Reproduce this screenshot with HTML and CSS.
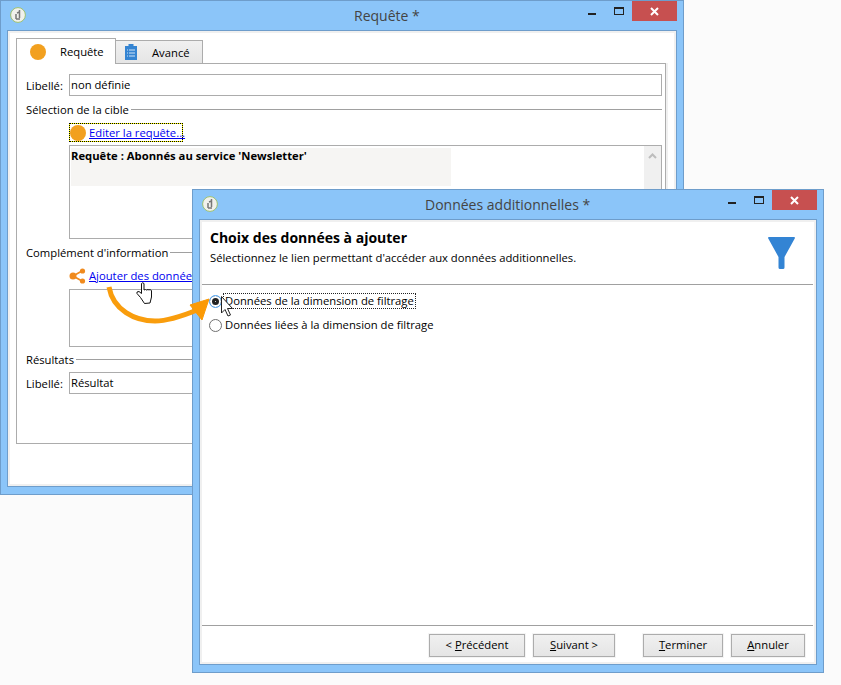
FILE: index.html
```html
<!DOCTYPE html>
<html lang="fr">
<head>
<meta charset="utf-8">
<title>Requête</title>
<link rel="stylesheet" href="styles.css">
</head>
<body>
<div class="desk">
  <section class="win win-main">
    <header class="titlebar">
      <svg class="appicon" viewBox="0 0 16 16"><circle cx="8" cy="8" r="7.400" fill="#f1f1ec" stroke="#9cc070"/><path d="M9.500 3v8M6 7v5M7 6l2.500-1M6 12h4" stroke="#777" stroke-width="1.500" fill="none"/></svg>
      <h1 class="title title-main">Requête *</h1>
      <span class="ctl-min"></span><span class="ctl-max"></span>
      <span class="ctl-close"><svg viewBox="0 0 9 9" width="9" height="9"><path d="M1 1l7 7M8 1L1 8" stroke="#fff" stroke-width="2"/></svg></span>
    </header>
    <div class="client">
      <div class="tabs">
        <div class="tab tab-on"><span class="dot"></span><span>Requête</span></div>
        <div class="tab tab-off">
          <svg class="clip" viewBox="0 0 12 16"><path d="M0 2h3.500V0h5v2H12v14H0z" fill="#3484d2"/><path d="M4 6h6M4 9h6M4 12h6M2 6h1M2 9h1M2 12h1" stroke="#cfe3f6"/></svg>
          <span>Avancé</span>
        </div>
      </div>
      <div class="pane">
        <div class="row"><label class="lbl">Libellé:</label><div class="input">non définie</div></div>
        <div class="legend legend-a"><span>Sélection de la cible</span><i></i></div>
        <div class="linkrow linkrow-a"><a class="focus"><span class="dot"></span><span class="lnk">Editer la requête...</span></a></div>
        <div class="memo memo-a">
          <div class="query">Requête : Abonnés au service 'Newsletter'</div>
          <div class="sbar"><svg viewBox="0 0 9 6" width="9" height="6"><path d="M1 5l3.500-3.500L8 5" fill="none" stroke="#bdbdbd" stroke-width="2"/></svg></div>
        </div>
        <div class="legend legend-b"><span>Complément d'information</span><i></i></div>
        <div class="linkrow linkrow-b">
          <svg class="share" viewBox="0 0 17 16"><path d="M4 8l9-5M4 8l9 5" stroke="#f08a1d" stroke-width="1.700"/><circle cx="4" cy="8" r="3.500" fill="#f08a1d"/><circle cx="13.500" cy="3" r="2.600" fill="#f08a1d"/><circle cx="13.500" cy="13" r="2.600" fill="#f08a1d"/></svg>
          <span class="lnk">Ajouter des données...</span>
        </div>
        <div class="memo memo-b"></div>
        <div class="legend legend-c"><span>Résultats</span><i></i></div>
        <div class="row row-c"><label class="lbl">Libellé:</label><div class="input">Résultat</div></div>
      </div>
    </div>
  </section>

  <section class="win win-sub">
    <header class="titlebar">
      <svg class="appicon" viewBox="0 0 16 16"><circle cx="8" cy="8" r="7.400" fill="#f1f1ec" stroke="#9cc070"/><path d="M9.500 3v8M6 7v5M7 6l2.500-1M6 12h4" stroke="#777" stroke-width="1.500" fill="none"/></svg>
      <h1 class="title title-sub">Données additionnelles *</h1>
      <span class="ctl-min"></span><span class="ctl-max"></span>
      <span class="ctl-close"><svg viewBox="0 0 9 9" width="9" height="9"><path d="M1 1l7 7M8 1L1 8" stroke="#fff" stroke-width="2"/></svg></span>
    </header>
    <div class="client client-sub">
      <div class="head">
        <div class="head-text">
          <h2 class="h2">Choix des données à ajouter</h2>
          <p class="sub">Sélectionnez le lien permettant d'accéder aux données additionnelles.</p>
        </div>
        <svg class="funnel" viewBox="0 0 27 32"><path d="M1 0h25q1 0 1 1L16.500 20v10.500q0 1.500-1.500 1.500h-3q-1.500 0-1.500-1.500V20L0 1q0-1 1-1z" fill="#3384d4"/></svg>
      </div>
      <div class="options">
        <div class="opt"><span class="radio radio-on"></span><span class="opt-label opt-focus">Données de la dimension de filtrage</span></div>
        <div class="opt"><span class="radio"></span><span class="opt-label">Données liées à la dimension de filtrage</span></div>
      </div>
      <footer class="foot">
        <button class="btn btn-prev">&lt; <u>P</u>récédent</button>
        <button class="btn btn-next"><u>S</u>uivant &gt;</button>
        <button class="btn btn-end"><u>T</u>erminer</button>
        <button class="btn btn-cancel"><u>A</u>nnuler</button>
      </footer>
    </div>
  </section>

  <svg class="overlay" viewBox="0 0 841 685" width="841" height="685">
    <path d="M109 287C113 310 135 321 155 321C170 321 185 315 197 310" fill="none" stroke="#f99d0d" stroke-width="5"/>
    <path d="M190 305L209 299L202 320z" fill="#fb9a06" stroke="#fb9a06" stroke-width="1"/>
    <path d="M144.500 303.500l-4-6-3.500-4v-1.500l2-.5 2.500 2v-10q1-1.500 2.500 0v6.500l1.500-.5 1 .5 1.500-.5 1 .5 1-.5 1.500 1v6.500l-1.500 6z" fill="#fff" stroke="#111" stroke-width="1"/>
    <path d="M221.500 296.500v16.500l3.500-3.500 3 6.500 2.500-1-3-6.500h5z" fill="#fff" stroke="#222" stroke-width="1"/>
  </svg>
</div>
</body>
</html>
```
FILE: styles.css
```css
* { box-sizing: border-box; }
html, body { margin: 0; padding: 0; }
body { width: 841px; height: 685px; overflow: hidden; background: #fbfbfb; font-family: "Open Sans", "Noto Sans", sans-serif; font-size: 11.25px; color: #000; }
.desk { position: relative; width: 841px; height: 685px; background: #fbfbfb; }

.win { position: absolute; display: flex; flex-direction: column; background: #8bc5f9; border: 1px solid #6e9dcb; }
.win-main { left: 0; top: 0; width: 684px; height: 495px; }
.win-sub { left: 192px; top: 189px; width: 632px; height: 484px; }

.titlebar { display: flex; align-items: flex-start; height: 29px; flex: none; position: relative; }
.appicon { width: 16px; height: 16px; margin: 6px 0 0 9px; flex: none; }
.title { position: absolute; top: 6px; margin: 0; font-size: 14px; line-height: 18px; font-weight: 400; color: #444; white-space: nowrap; }
.title-main { left: 353px; }
.title-sub { left: 232px; }
.ctl-min { position: absolute; top: 12px; width: 8px; height: 2px; background: #222; }
.ctl-max { position: absolute; top: 6px; width: 10px; height: 8px; border: 1px solid #222; border-top-width: 2px; }
.ctl-close { position: absolute; top: 0; width: 45px; height: 20px; background: #c75050; display: flex; align-items: center; justify-content: center; }
.win-main .ctl-min { left: 587px; }
.win-main .ctl-max { left: 613px; }
.win-main .ctl-close { left: 631px; }
.win-sub .ctl-min { left: 535px; }
.win-sub .ctl-max { left: 561px; }
.win-sub .ctl-close { left: 579px; }

.client { flex: 1; margin: 0 6px 7px 6px; background: #fff; border: 1px solid #6e9dcb; outline: 2px solid #f0f0f0; outline-offset: -3px; padding: 8px 10px 0 8px; display: flex; flex-direction: column; }

.tabs { display: flex; align-items: flex-end; height: 25px; position: relative; z-index: 1; margin-bottom: -1px; }
.tab { display: flex; align-items: center; border: 1px solid #acacac; }
.tab-on { width: 100px; height: 26px; background: #fff; border-bottom: 0; padding-left: 13px; gap: 14px; }
.tab-off { width: 88px; height: 24px; margin-left: -1px; background: linear-gradient(#f0f0f0, #e5e5e5); padding-left: 9px; gap: 15px; }
.dot { width: 16px; height: 16px; border-radius: 50%; background: #f2a01f; flex: none; }
.clip { width: 12px; height: 16px; }

.pane { border: 1px solid #acacac; box-shadow: 2px 0 0 #f0f0f0; height: 381px; width: 650px; padding: 10px 3px 0 9px; display: flex; flex-direction: column; background: #fff; }
.row { display: flex; align-items: center; }
.lbl { width: 43px; flex: none; }
.input { flex: 1; height: 22px; border: 1px solid #acacac; padding-left: 1px; line-height: 19px; background: #fff; }
.legend { display: flex; align-items: center; gap: 2px; height: 16px; }
.legend i { flex: 1; height: 1px; background: #a0a0a0; }
.legend-a { margin-top: 5px; }
.legend-b { margin-top: 5px; }
.legend-c { margin-top: 4px; }
.row-c { margin-top: 5px; }

.linkrow { display: flex; align-items: center; margin-left: 43px; }
.linkrow-a { margin-top: 6px; height: 19px; }
.linkrow-b { margin-top: 7px; height: 17px; gap: 3px; }
.focus { display: flex; align-items: center; gap: 3px; height: 19px; width: 114px; border: 1px dotted #000; background: linear-gradient(#fff, #fff) padding-box, #ff0 border-box; }
.lnk { color: #0000f0; text-decoration: underline; white-space: nowrap; }
.share { width: 17px; height: 16px; flex: none; }

.memo { margin-left: 43px; border: 1px solid #acacac; position: relative; background: #fff; }
.memo-a { height: 94px; margin-top: 3px; padding: 2px 0 0 1px; }
.memo-b { height: 58px; margin-top: 5px; }
.query { width: 380px; height: 38px; background: #f6f5f3; font-weight: 700; line-height: 16px; white-space: nowrap; }
.sbar { position: absolute; right: 0; top: 0; bottom: 0; width: 17px; background: #f0f0f0; display: flex; justify-content: center; padding-top: 7px; }

.client-sub { padding: 0; position: relative; background: #fff; }
.head { display: flex; justify-content: space-between; height: 65px; margin: 0 3px 0 1px; border-bottom: 1px solid #a0a0a0; padding: 8px 0 0 9px; flex: none; }
.h2 { margin: 0; font-size: 14px; line-height: 19px; font-weight: 700; color: #000; }
.sub { margin: 2px 0 0; line-height: 18px; white-space: nowrap; }
.funnel { width: 27px; height: 32px; margin: 9px 18px 0 0; }

.options { flex: 1; padding: 8px 0 0 9px; display: flex; flex-direction: column; }
.opt { display: flex; align-items: center; height: 16px; margin-bottom: 8px; }
.radio { width: 13px; height: 13px; border: 1px solid #707070; border-radius: 50%; background: #fff; flex: none; }
.radio-on { border-color: #4a9eee; box-shadow: inset 0 0 0 2px #fff, inset 0 0 0 5px #222; }
.opt-label { margin-left: 1px; padding: 0 1px; border: 1px dotted transparent; white-space: nowrap; line-height: 14px; }
.opt-focus { border-color: #222; }

.foot { flex: none; height: 39px; margin: 0 3px 0 1px; border-top: 1px solid #a0a0a0; display: flex; padding: 8px 0 0 228px; }
.btn { height: 23px; font: inherit; color: #000; background: linear-gradient(#f0f0f0, #e5e5e5); border: 1px solid #acacac; outline: 1px solid #f4f4f4; padding: 0 0 2px; }
.btn-prev { width: 96px; }
.btn-next { width: 82px; margin-left: 8px; }
.btn-end { width: 80px; margin-left: 28px; }
.btn-cancel { width: 74px; margin-left: 8px; }

.overlay { position: absolute; left: 0; top: 0; pointer-events: none; }
```
